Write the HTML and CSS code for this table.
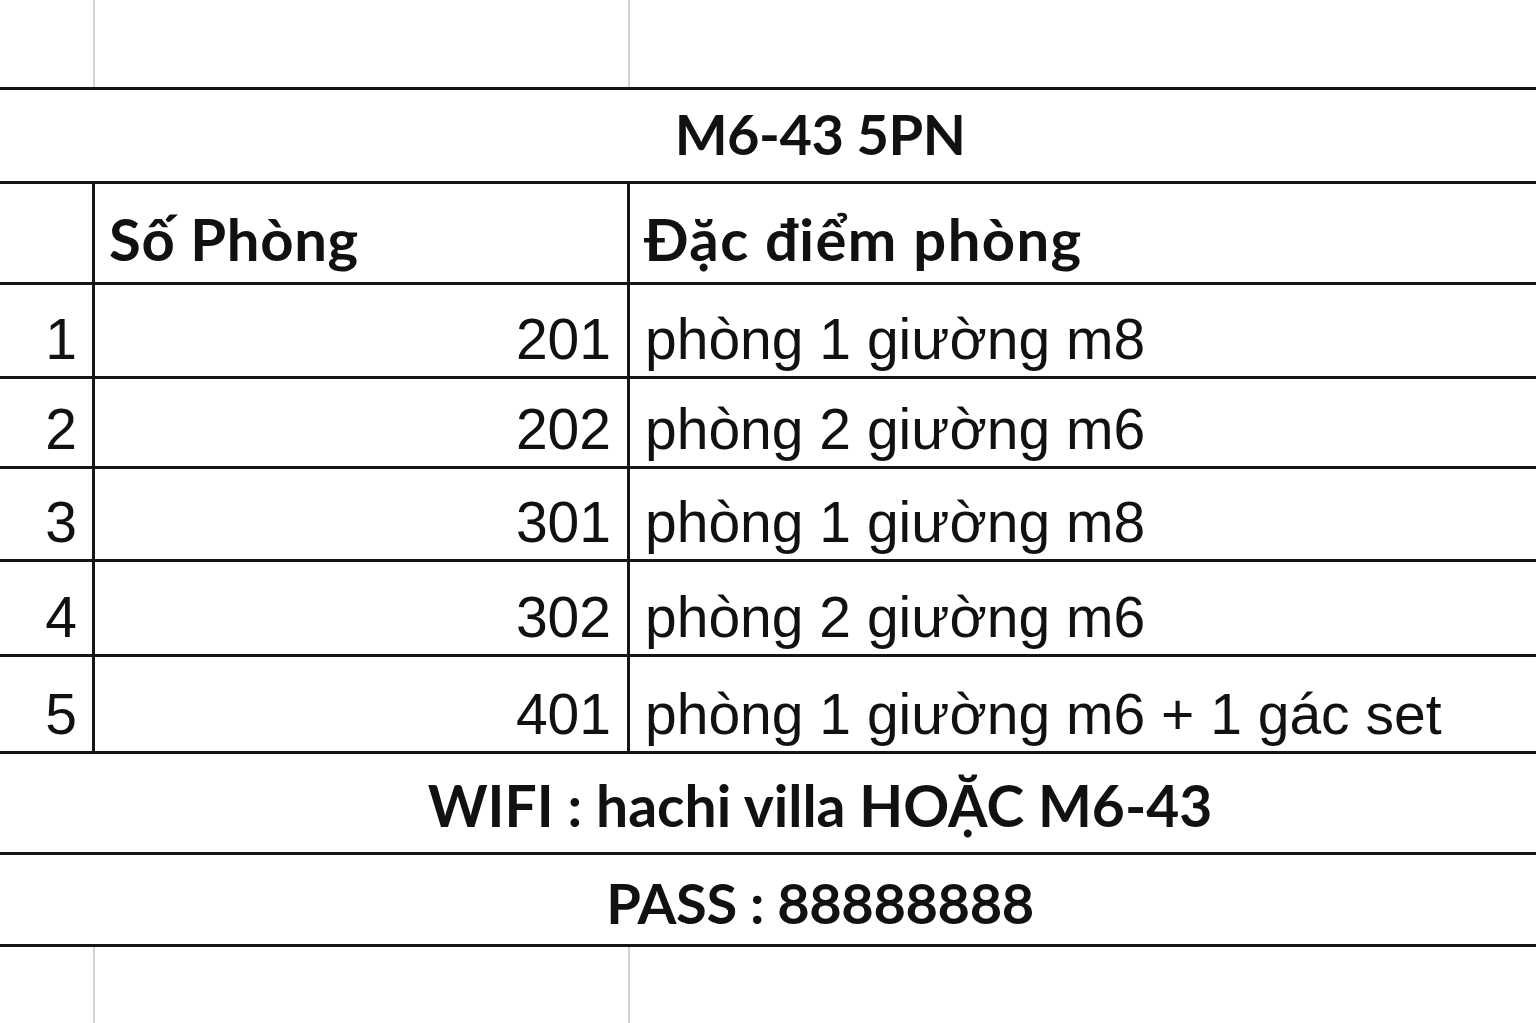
FILE: index.html
```html
<!DOCTYPE html>
<html lang="vi">
<head>
<meta charset="utf-8">
<title>M6-43 5PN</title>
<link rel="stylesheet" href="styles.css">
</head>
<body>
<div class="sheet">
  <div class="gap gap-top">
    <div class="gcell c0"></div>
    <div class="gcell c1"></div>
    <div class="gcell c2"></div>
  </div>
  <div class="table">
    <div class="row merged r-title"><div class="cell bold">M6-43 5PN</div></div>
    <div class="row r-head">
      <div class="cell c0"></div>
      <div class="cell c1 bold">Số Phòng</div>
      <div class="cell c2 bold">Đặc điểm phòng</div>
    </div>
    <div class="row data r1">
      <div class="cell c0 num">1</div>
      <div class="cell c1 num">201</div>
      <div class="cell c2">phòng 1 giường m8</div>
    </div>
    <div class="row data r2">
      <div class="cell c0 num">2</div>
      <div class="cell c1 num">202</div>
      <div class="cell c2">phòng 2 giường m6</div>
    </div>
    <div class="row data r3">
      <div class="cell c0 num">3</div>
      <div class="cell c1 num">301</div>
      <div class="cell c2">phòng 1 giường m8</div>
    </div>
    <div class="row data r4">
      <div class="cell c0 num">4</div>
      <div class="cell c1 num">302</div>
      <div class="cell c2">phòng 2 giường m6</div>
    </div>
    <div class="row data r5">
      <div class="cell c0 num">5</div>
      <div class="cell c1 num">401</div>
      <div class="cell c2">phòng 1 giường m6 + 1 gác set</div>
    </div>
    <div class="row merged r-wifi"><div class="cell bold">WIFI : hachi villa HOẶC M6-43</div></div>
    <div class="row merged r-pass"><div class="cell bold">PASS : 88888888</div></div>
  </div>
  <div class="gap gap-bottom">
    <div class="gcell c0"></div>
    <div class="gcell c1"></div>
    <div class="gcell c2"></div>
  </div>
</div>
</body>
</html>
```

FILE: styles.css
```css
html, body {
  margin: 0;
  padding: 0;
  background: #ffffff;
  overflow: hidden;
}

.sheet {
  width: 100%;
  height: 1023px;
  display: flex;
  flex-direction: column;
  color: #111111;
}

.gap {
  display: flex;
}
.gap-top { height: 87px; }
.gap-bottom { flex: 1; }

.gcell { height: 100%; }
.gcell.c0, .gcell.c1 { border-right: 2px solid #d4d4d4; }

.c0 { width: 95px; flex: none; box-sizing: border-box; }
.c1 { width: 535px; flex: none; box-sizing: border-box; }
.c2 { flex: 1; box-sizing: border-box; }

.table {
  border-top: 3px solid #161616;
  display: flex;
  flex-direction: column;
}

.row {
  display: flex;
  box-sizing: border-box;
  border-bottom: 3px solid #161616;
}

.cell {
  display: flex;
  align-items: flex-end;
  line-height: 1;
  font-family: "Liberation Sans", Arial, sans-serif;
  font-size: 57px;
  box-sizing: border-box;
  white-space: nowrap;
}

.row > .c0, .row > .c1 { border-right: 3px solid #161616; }

.bold {
  font-family: Lato, "Open Sans", sans-serif;
  font-weight: 700;
  font-size: 56px;
}

/* merged cells continue past the right edge; offset keeps their centre at x=820 */
.merged .cell {
  flex: 1;
  justify-content: center;
  padding-left: 104px;
}

.r-title { height: 94px; }
.r-title .cell { font-size: 56px; letter-spacing: -0.5px; padding-bottom: 19px; }

.r-head { height: 101px; }
.r-head .cell { font-size: 58px; letter-spacing: 1.4px; padding-bottom: 14px; }
.r-head .c1 { padding-left: 14px; letter-spacing: 0.7px; }
.r-head .c2 { padding-left: 14px; }

.data .cell { padding-bottom: 8px; }
.data .c0.num { justify-content: flex-end; padding-right: 15px; }
.data .c1.num { justify-content: flex-end; padding-right: 16px; }
.data .c2 { padding-left: 15px; }

.r1 { height: 94px; }
.r2 { height: 90px; }
.r3 { height: 93px; }
.r4 { height: 95px; }
.r5 { height: 97px; }

.r-wifi { height: 101px; }
.r-wifi .cell { font-size: 57px; padding-bottom: 18px; }

.r-pass { height: 92px; }
.r-pass .cell { letter-spacing: -0.4px; padding-bottom: 13px; }
```
